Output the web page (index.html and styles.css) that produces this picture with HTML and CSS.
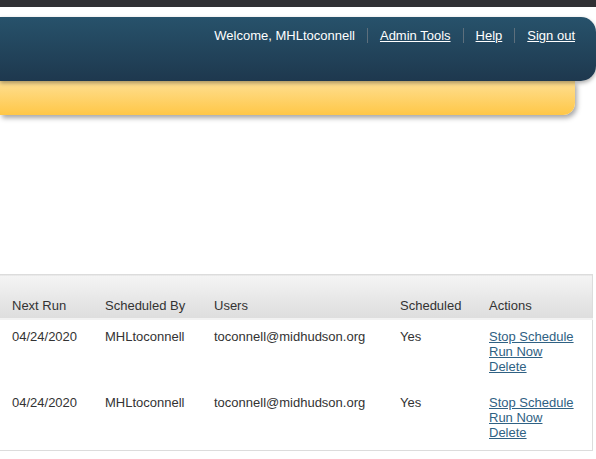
FILE: index.html
```html
<!doctype html>
<html lang="en">
<head>
	<meta charset="UTF-8">
	<title>Scheduled Reports</title>
	<link rel="stylesheet" href="styles.css">
</head>
<body>
	<div class="topstrip"></div>
	<div class="header">
		<ul class="nav">
			<li class="welcome">Welcome, MHLtoconnell</li>
			<li><a href="#">Admin Tools</a></li>
			<li><a href="#">Help</a></li>
			<li><a href="#">Sign out</a></li>
		</ul>
	</div>
	<div class="ribbon"></div>

	<table class="schedule">
		<thead>
			<tr>
				<th class="c-next">Next Run</th>
				<th class="c-by">Scheduled By</th>
				<th class="c-users">Users</th>
				<th class="c-sched">Scheduled</th>
				<th class="c-act">Actions</th>
			</tr>
		</thead>
		<tbody>
			<tr>
				<td>04/24/2020</td>
				<td>MHLtoconnell</td>
				<td>toconnell@midhudson.org</td>
				<td>Yes</td>
				<td class="actions">
					<a href="#">Stop Schedule</a>
					<a href="#">Run Now</a>
					<a href="#">Delete</a>
				</td>
			</tr>
			<tr>
				<td>04/24/2020</td>
				<td>MHLtoconnell</td>
				<td>toconnell@midhudson.org</td>
				<td>Yes</td>
				<td class="actions">
					<a href="#">Stop Schedule</a>
					<a href="#">Run Now</a>
					<a href="#">Delete</a>
				</td>
			</tr>
		</tbody>
	</table>
</body>
</html>
```

FILE: styles.css
```css
body{
	margin: 0;
	padding: 0;
	font-family: "Liberation Sans", Arial, sans-serif;
	font-size: 13px;
	color: #333;
	background: #fff;
}
ul{
	list-style: none;
	margin: 0;
	padding: 0;
}
.topstrip{
	height: 7px;
	background-color: #303034;
}
.header{
	position: relative;
	z-index: 2;
	margin-top: 10px;
	height: 64px;
	background: linear-gradient(#27526b, #1e384e);
	border-radius: 0 15px 15px 0;
	box-shadow: 0 2px 4px rgba(0, 0, 0, 0.35);
}
.nav{
	display: flex;
	justify-content: flex-end;
	padding: 11px 21px 0 0;
	line-height: 15px;
	color: #fff;
}
.nav li{
	padding: 0 12px;
	border-left: 1px solid #5d6f7c;
}
.nav li.welcome{
	border-left: 0;
}
.nav li:last-child{
	padding-right: 0;
}
.nav a{
	color: #fff;
}
.ribbon{
	position: relative;
	z-index: 1;
	width: 575px;
	height: 34px;
	background: linear-gradient(#fedf92, #ffc747);
	border-radius: 0 0 12px 0;
	box-shadow: 2px 3px 5px rgba(0, 0, 0, 0.35);
}
.schedule{
	margin-top: 159px;
	width: 593px;
	border-collapse: collapse;
	border-top: 1px solid #dcdcdc;
	border-right: 1px solid #dcdcdc;
	border-bottom: 1px solid #dcdcdc;
	line-height: 15px;
}
.schedule th{
	text-align: left;
	font-weight: normal;
	padding: 23px 12px 5px;
	background: linear-gradient(#f4f4f4, #e6e6e6 60%, #dddddd);
	border-bottom: 1px solid #c9c9c9;
}
.schedule td{
	vertical-align: top;
	padding: 11px 12px 10px;
	height: 45px;
}
.schedule tbody tr:first-child td{
	border-top: 2px solid #f2f2f2;
	padding-top: 9px;
	padding-bottom: 10px;
}
.c-next{ width: 69px; }
.c-by{ width: 85px; }
.c-users{ width: 162px; }
.c-sched{ width: 65px; }
.actions a{
	display: block;
	color: #2f6183;
}
```
